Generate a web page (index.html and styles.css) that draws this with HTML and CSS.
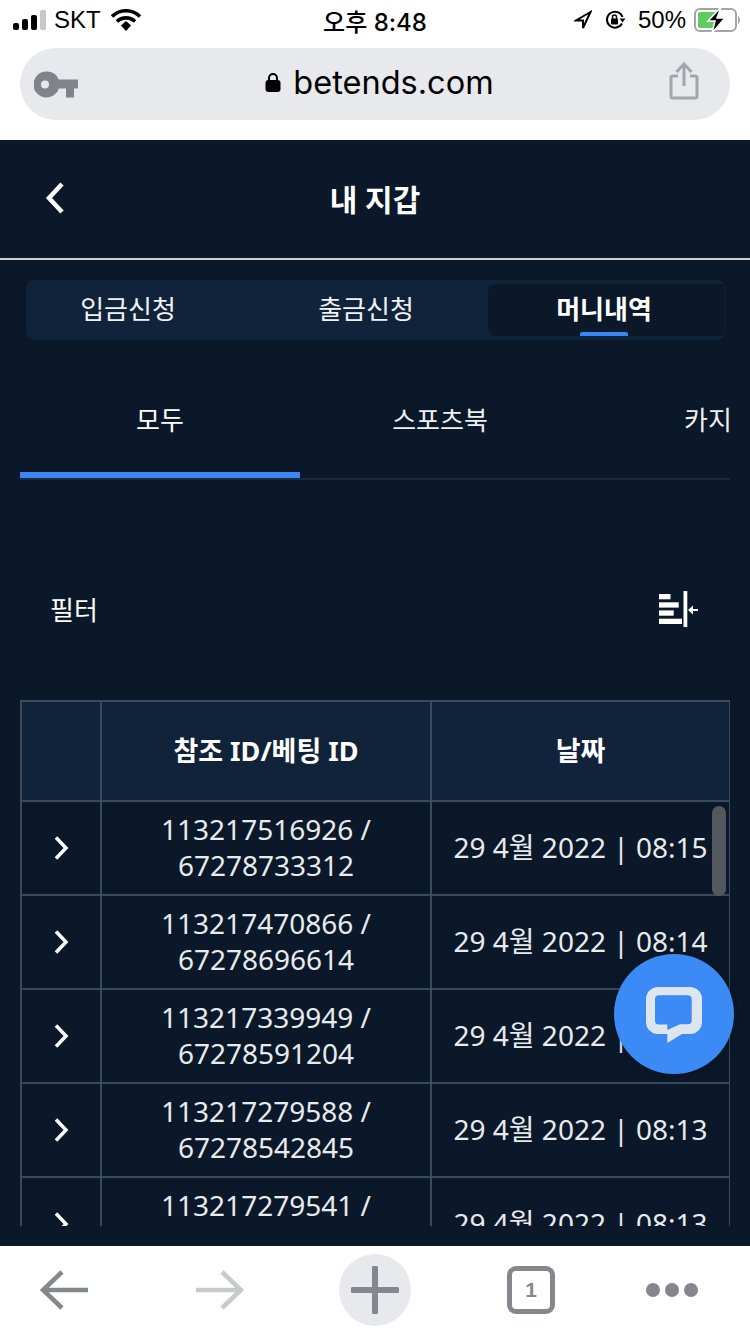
FILE: index.html
```html
<!DOCTYPE html>
<html>
<head>
  <title>내 지갑</title>
  <link rel="stylesheet" href="styles.css">
</head>
<body>

<!-- Browser top -->
<div class="status-bar">
  <div class="status-left">
    <svg class="signal" width="36" height="20" viewBox="0 0 36 20">
      <rect x="0" y="13" width="6" height="7" rx="2" fill="#000"/>
      <rect x="9" y="9" width="6" height="11" rx="2" fill="#000"/>
      <rect x="18" y="5" width="6" height="15" rx="2" fill="#000"/>
      <rect x="27" y="0" width="6" height="20" rx="2" fill="#c8c8c8"/>
    </svg>
    <span>SKT</span>
    <svg class="wifi" width="30" height="22" viewBox="0 0 30 22">
      <path d="M1 7.500a20 20 0 0 1 28 0" fill="none" stroke="#000" stroke-width="3.600"/>
      <path d="M6 12.500a13 13 0 0 1 18 0" fill="none" stroke="#000" stroke-width="3.600"/>
      <path d="M10 16.500l5-4.500 5 4.500-5 5.500z" fill="#000"/>
    </svg>
  </div>
  <div class="status-time">오후 8:48</div>
  <div class="status-right">
    <svg width="18" height="20" viewBox="0 0 18 20"><path d="M16.500 2L2 10.500h7V18z" fill="none" stroke="#000" stroke-width="2"/></svg>
    <svg width="22" height="22" viewBox="0 0 22 22">
      <path d="M18 14.500A8 8 0 1 1 18.500 8" fill="none" stroke="#000" stroke-width="2"/>
      <path d="M15.500 9.500h6l-3 4z" fill="#000"/>
      <rect x="7" y="9.500" width="7" height="6" rx="1" fill="#000"/>
      <path d="M8.500 10V8a2 2 0 0 1 4 0v2" fill="none" stroke="#000" stroke-width="1.500"/>
    </svg>
    <span class="battery-pct">50%</span>
    <svg class="battery" width="47" height="26" viewBox="0 0 47 26">
      <rect x="1" y="2" width="41" height="22" rx="5" fill="none" stroke="#a4a4a4" stroke-width="2"/>
      <rect x="4" y="5" width="20" height="16" rx="2" fill="#5ecb62"/>
      <path d="M44 9c2.500 .5 2.500 7.500 0 8z" fill="#a4a4a4"/>
      <path d="M27 0L14 14h7l-3 12 13-15h-8z" fill="#000" stroke="#fff" stroke-width="1.500"/>
    </svg>
  </div>
</div>

<div class="url-area">
  <div class="url-bar">
    <svg class="key" width="44" height="27" viewBox="0 0 44 27">
      <path d="M12.500 .5a13 13 0 0 1 12.300 8H44v9h-4v9h-8v-9h-7.200a13 13 0 1 1-12.300-17z" fill="#808488"/>
      <circle cx="11" cy="13.500" r="4" fill="#e8e9ed"/>
    </svg>
    <div class="url-text">
      <svg width="16" height="20" viewBox="0 0 16 20">
        <path d="M4 9V6a4 4 0 0 1 8 0v3" fill="none" stroke="#000" stroke-width="2"/>
        <rect x="0.500" y="8" width="15" height="12" rx="3" fill="#000"/>
      </svg>
      <span>betends.com</span>
    </div>
    <svg class="share" width="30" height="38" viewBox="0 0 30 38">
      <path d="M9 14H3.500a1.500 1.500 0 0 0-1.500 1.500v19A1.500 1.500 0 0 0 3.500 36h23a1.500 1.500 0 0 0 1.500-1.500v-19a1.500 1.500 0 0 0-1.500-1.500H21" fill="none" stroke="#a2a5a9" stroke-width="3"/>
      <path d="M15 24V3M7.500 10L15 2l7.500 8" fill="none" stroke="#a2a5a9" stroke-width="3"/>
    </svg>
  </div>
</div>

<!-- Page -->
<div class="page">
  <div class="page-header">
    <svg class="back" width="22" height="34" viewBox="0 0 22 34"><path d="M18 3L5 17l13 14" fill="none" stroke="#fff" stroke-width="4.500"/></svg>
    <h1>내 지갑</h1>
  </div>

  <div class="wallet-tabs">
    <div class="wallet-tab">입금신청</div>
    <div class="wallet-tab">출금신청</div>
    <div class="wallet-tab active">머니내역</div>
  </div>

  <div class="type-tabs">
    <div class="type-tab active">모두</div>
    <div class="type-tab">스포츠북</div>
    <div class="type-tab">카지노</div>
  </div>

  <div class="filter-row">
    <span>필터</span>
    <svg width="40" height="36" viewBox="0 0 40 36">
      <rect x="0" y="3" width="11.500" height="5.300" fill="#fff"/>
      <rect x="0" y="11.300" width="19.700" height="5.300" fill="#fff"/>
      <rect x="0" y="19.400" width="14.700" height="5.300" fill="#fff"/>
      <rect x="0" y="27.700" width="23" height="5.300" fill="#fff"/>
      <rect x="24.500" y="0" width="3.800" height="36" fill="#fff"/>
      <path d="M39 19H33" fill="none" stroke="#fff" stroke-width="2"/>
      <path d="M34 14.500L29 19l5 4.500z" fill="#fff"/>
    </svg>
  </div>

  <div class="table-wrap">
    <table class="money-table">
      <thead>
        <tr>
          <th class="col-arrow"></th>
          <th class="col-id">참조 ID/베팅 ID</th>
          <th class="col-date">날짜</th>
        </tr>
      </thead>
      <tbody>
        <tr>
          <td><svg class="row-arrow" width="16" height="26" viewBox="0 0 16 26"><path d="M3 2.500l10 10.500-10 10.500" fill="none" stroke="#fff" stroke-width="3.500"/></svg></td>
          <td>113217516926 /<br>67278733312</td>
          <td>29 4월 2022 | 08:15</td>
        </tr>
        <tr>
          <td><svg class="row-arrow" width="16" height="26" viewBox="0 0 16 26"><path d="M3 2.500l10 10.500-10 10.500" fill="none" stroke="#fff" stroke-width="3.500"/></svg></td>
          <td>113217470866 /<br>67278696614</td>
          <td>29 4월 2022 | 08:14</td>
        </tr>
        <tr>
          <td><svg class="row-arrow" width="16" height="26" viewBox="0 0 16 26"><path d="M3 2.500l10 10.500-10 10.500" fill="none" stroke="#fff" stroke-width="3.500"/></svg></td>
          <td>113217339949 /<br>67278591204</td>
          <td>29 4월 2022 | 08:14</td>
        </tr>
        <tr>
          <td><svg class="row-arrow" width="16" height="26" viewBox="0 0 16 26"><path d="M3 2.500l10 10.500-10 10.500" fill="none" stroke="#fff" stroke-width="3.500"/></svg></td>
          <td>113217279588 /<br>67278542845</td>
          <td>29 4월 2022 | 08:13</td>
        </tr>
        <tr>
          <td><svg class="row-arrow" width="16" height="26" viewBox="0 0 16 26"><path d="M3 2.500l10 10.500-10 10.500" fill="none" stroke="#fff" stroke-width="3.500"/></svg></td>
          <td>113217279541 /<br>67278542800</td>
          <td>29 4월 2022 | 08:13</td>
        </tr>
      </tbody>
    </table>
    <div class="scroll-thumb"></div>
  </div>

  <div class="chat-btn">
    <svg width="56" height="56" viewBox="0 0 56 56">
      <path fill-rule="evenodd" d="M12 0H44A12 12 0 0 1 56 12V35A12 12 0 0 1 44 47H36L21.300 56V47H12A12 12 0 0 1 0 35V12A12 12 0 0 1 12 0ZM13 8.300A4 4 0 0 0 9 12.300V33.500A4 4 0 0 0 13 37.500H21.300V43L34 37.300H41.700A4 4 0 0 0 45.700 33.300V12.300A4 4 0 0 0 41.700 8.300Z" fill="#dde6ef"/>
    </svg>
  </div>
</div>

<!-- Browser bottom -->
<div class="bottom-bar">
  <svg width="50" height="40" viewBox="0 0 50 40"><path d="M48 20H4M22 2L3 20l19 18" fill="none" stroke="#84888c" stroke-width="4.500"/></svg>
  <svg class="nav-next" width="50" height="40" viewBox="0 0 50 40"><path d="M2 20h44M28 2l19 18-19 18" fill="none" stroke="#c9cacc" stroke-width="4.500"/></svg>
  <div class="plus-btn">
    <svg width="48" height="48" viewBox="0 0 48 48"><path d="M24 2v44M2 24h44" fill="none" stroke="#84888c" stroke-width="6" stroke-linecap="round"/></svg>
  </div>
  <div class="tab-count">1</div>
  <div class="dots"><i></i><i></i><i></i></div>
</div>

</body>
</html>
```

FILE: styles.css
```css
* {
  box-sizing: border-box;
}
html, body {
  margin: 0;
  padding: 0;
}
body {
  width: 750px;
  height: 1334px;
  overflow: hidden;
  background: #fff;
  font-family: "Noto Sans", "Noto Sans CJK KR", sans-serif;
  display: flex;
  flex-direction: column;
}

/* Status bar */
.status-bar {
  height: 40px;
  flex: none;
  display: flex;
  align-items: center;
  justify-content: space-between;
  position: relative;
  padding: 0 9px 0 13px;
  font-family: "Liberation Sans", "Noto Sans CJK KR", sans-serif;
  font-size: 24px;
  color: #000;
}
.status-left, .status-right {
  display: flex;
  align-items: center;
}
.status-left .signal {
  margin-right: 5px;
}
.status-left .wifi {
  margin-left: 10px;
}
.status-right {
  gap: 12px;
}
.status-right .battery {
  margin-left: -4px;
}
.status-time {
  position: absolute;
  left: 0;
  right: 0;
  text-align: center;
  font-weight: 500;
  font-family: Inter, "Noto Sans CJK KR", sans-serif;
}

/* Url bar */
.url-area {
  height: 100px;
  flex: none;
  padding: 8px 20px 20px;
}
.url-bar {
  height: 72px;
  border-radius: 36px;
  background: #e8e9ed;
  display: flex;
  align-items: center;
  justify-content: space-between;
  padding: 0 31px 0 14px;
}
.url-text {
  display: flex;
  align-items: center;
  gap: 12px;
  font-family: Inter, "Liberation Sans", sans-serif;
  font-size: 32.5px;
  color: #000;
  margin-left: 12px;
  margin-top: -4px;
}
.url-bar .share {
  margin-top: -6px;
}

/* Page */
.page {
  height: 1106px;
  flex: none;
  background: #0a1829;
  position: relative;
  color: #fff;
}
.page-header {
  height: 120px;
  border-bottom: 2px solid #cfcfcf;
  display: flex;
  align-items: center;
  justify-content: center;
  position: relative;
}
.page-header h1 {
  margin: 0 0 2px;
  font-size: 30px;
  font-weight: 700;
}
.back {
  position: absolute;
  left: 44px;
  top: 41px;
}

.wallet-tabs {
  margin: 20px 25px 0 26px;
  height: 60px;
  background: #10233b;
  border-radius: 8px;
  display: flex;
  padding: 4px 1px 4px 0;
}
.wallet-tab {
  width: 204px;
  display: flex;
  align-items: center;
  justify-content: center;
  font-size: 26px;
  color: #f0f2f4;
  position: relative;
  padding-bottom: 4px;
}
.wallet-tab:nth-child(2) {
  width: 258px;
  padding-left: 14px;
}
.wallet-tab.active {
  width: 236px;
  background: #0a1829;
  border-radius: 8px 0 0 8px;
  font-weight: 700;
  color: #fff;
  padding-right: 4px;
}
.wallet-tab.active::after {
  content: "";
  position: absolute;
  bottom: 0;
  left: 92px;
  width: 48px;
  height: 4px;
  border-radius: 2px 2px 0 0;
  background: #3b86f7;
}

.type-tabs {
  margin: 32px 20px 0;
  height: 108px;
  display: flex;
  overflow: hidden;
  border-bottom: 2px solid #1d2a3a;
}
.type-tab {
  width: 280px;
  flex: none;
  height: 106px;
  text-align: center;
  font-size: 26px;
  color: #eef0f2;
  padding-top: 30px;
  line-height: 36px;
}
.type-tab:last-child {
  text-align: left;
  padding-left: 104px;
}
.type-tab.active {
  border-bottom: 6px solid #3b86f7;
  color: #fff;
}

.filter-row {
  display: flex;
  align-items: center;
  justify-content: space-between;
  padding: 38px 51px 0 50px;
  height: 220px;
  font-size: 26px;
}

/* Table */
.table-wrap {
  margin: 0 20px;
  height: 526px;
  overflow: hidden;
  position: relative;
}
.money-table {
  width: 709px;
  border-collapse: collapse;
  table-layout: fixed;
  font-size: 28px;
  color: #e8ebee;
}
.money-table th, .money-table td {
  border: 2px solid #3a4b60;
  text-align: center;
  padding: 0;
}
.money-table th {
  height: 100px;
  background: #10233b;
  color: #fff;
  font-size: 27px;
  font-weight: 700;
  padding-bottom: 3px;
}
.money-table td {
  height: 94px;
  line-height: 36px;
  padding-bottom: 2px;
}
.col-arrow {
  width: 80px;
}
.col-id {
  width: 330px;
}
.col-date {
  width: 299px;
}
.row-arrow {
  display: block;
  margin: 2px 0 0 31px;
}
.scroll-thumb {
  position: absolute;
  left: 692px;
  top: 106px;
  width: 14px;
  height: 90px;
  border-radius: 7px;
  background: #53585f;
}

.chat-btn {
  position: absolute;
  left: 614px;
  top: 814px;
  width: 120px;
  height: 120px;
  border-radius: 50%;
  background: #3b8af5;
  display: flex;
  align-items: center;
  justify-content: center;
  box-shadow: 0 0 12px rgba(0,0,0,0.2);
}
.chat-btn svg {
  margin-top: 2px;
}

/* Bottom bar */
.bottom-bar {
  flex: 1;
  background: #fff;
  display: flex;
  align-items: center;
  padding-left: 40px;
}
.nav-next {
  margin-left: 104px;
}
.plus-btn {
  width: 72px;
  height: 72px;
  border-radius: 50%;
  background: #e8e9ed;
  display: flex;
  align-items: center;
  justify-content: center;
  margin-left: 95px;
}
.tab-count {
  width: 48px;
  height: 48px;
  margin-left: 96px;
  border: 5px solid #84888c;
  border-radius: 9px;
  color: #84888c;
  font-size: 21px;
  font-weight: 700;
  display: flex;
  align-items: center;
  justify-content: center;
  font-family: "Liberation Sans", sans-serif;
}
.dots {
  display: flex;
  gap: 5px;
  margin-left: 91px;
}
.dots i {
  width: 14px;
  height: 14px;
  border-radius: 50%;
  background: #84888c;
  display: block;
}
```
